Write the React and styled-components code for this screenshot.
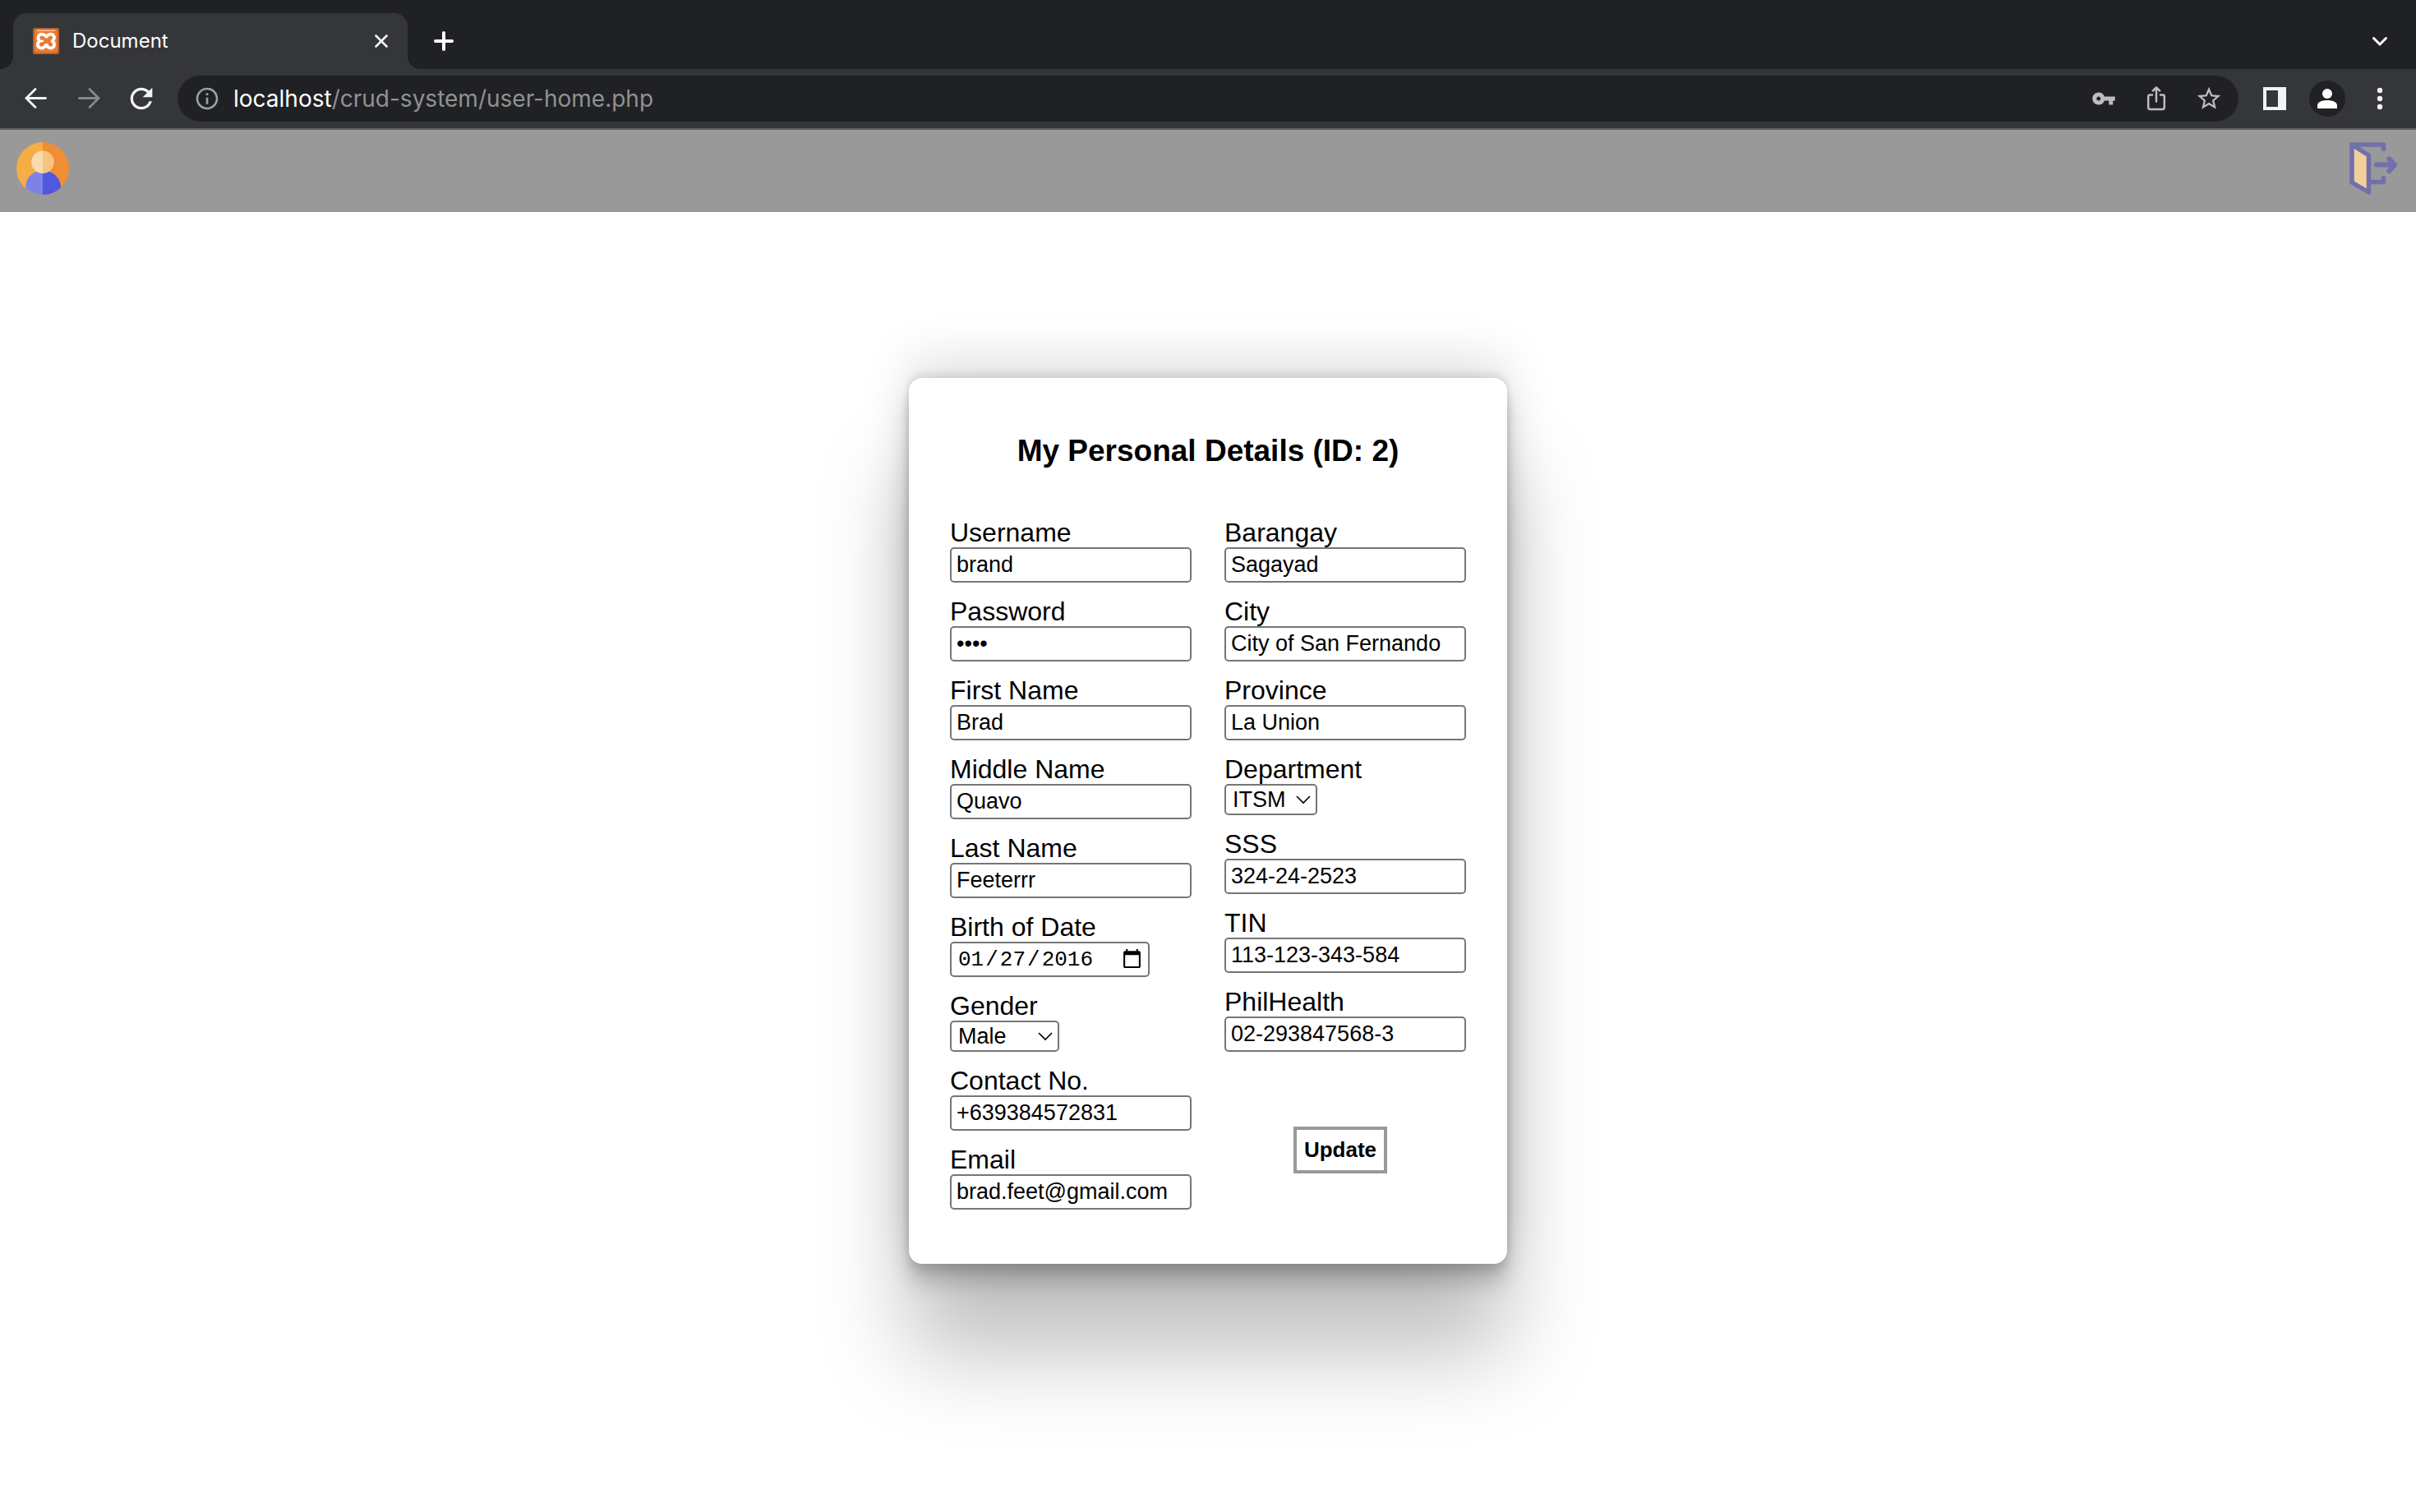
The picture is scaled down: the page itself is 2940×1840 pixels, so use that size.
import React from "react";
import styled, { createGlobalStyle } from "styled-components";
import { MdInfoOutline, MdRefresh, MdStarBorder, MdVpnKey } from "react-icons/md";

const GlobalStyle = createGlobalStyle`
  *, *::before, *::after { box-sizing: border-box; }
  body {
    margin: 0;
    background: #fff;
    color: #000;
    font-family: "Liberation Sans", Arial, sans-serif;
  }
`;

const Window = styled.div`
  display: flex;
  flex-direction: column;
  min-height: 100vh;
`;

/* ---------- browser frame ---------- */

const TabStrip = styled.div`
  display: flex;
  align-items: center;
  height: 84px;
  padding: 16px 22px 0 16px;
  background: #202124;
  color: #fff;
  font-family: Inter, Roboto, sans-serif;
`;

const Tab = styled.div`
  position: relative;
  display: flex;
  align-items: center;
  gap: 16px;
  width: 480px;
  height: 100%;
  margin-right: 22px;
  padding: 0 24px;
  border-radius: 16px 16px 0 0;
  background: #35363a;
  font-size: 24px;

  &::before,
  &::after {
    content: "";
    position: absolute;
    bottom: 0;
    width: 16px;
    height: 16px;
  }
  &::before {
    right: 100%;
    background: radial-gradient(circle at 0 0, transparent 16px, #35363a 16px);
  }
  &::after {
    left: 100%;
    background: radial-gradient(circle at 100% 0, transparent 16px, #35363a 16px);
  }
`;

const TabTitle = styled.span`
  flex: 1;
  line-height: 32px;
`;

const IconButton = styled.button`
  display: flex;
  align-items: center;
  justify-content: center;
  flex: none;
  width: ${({ $size = 44 }) => $size}px;
  height: ${({ $size = 44 }) => $size}px;
  margin: 0;
  padding: 0;
  border: 0;
  border-radius: 50%;
  background: ${({ $fill = "transparent" }) => $fill};
  color: ${({ $color = "#f1f3f4" }) => $color};
`;

const Spacer = styled.div`
  flex: 1;
`;

const Toolbar = styled.div`
  display: flex;
  align-items: center;
  gap: 20px;
  height: 74px;
  padding: 0 22px;
  border-bottom: 2px solid #5f6063;
  background: #35363a;
`;

const AddressBar = styled.div`
  display: flex;
  flex: 1;
  align-items: center;
  gap: 20px;
  height: 56px;
  margin: 0 2px;
  padding: 0 14px 0 20px;
  border-radius: 28px;
  background: #202124;
`;

const Location = styled.div`
  display: flex;
  flex: 1;
  align-items: center;
  gap: 16px;
  color: #9aa0a6;
`;

const Url = styled.div`
  flex: 1;
  color: #909193;
  font-family: Inter, Roboto, sans-serif;
  font-size: 28px;
  line-height: 36px;
`;

const Host = styled.span`
  color: #fff;
`;

/* ---------- page ---------- */

const PageHeader = styled.header`
  display: flex;
  align-items: flex-start;
  justify-content: space-between;
  height: 100px;
  padding: 15px 20px;
  background: #999;
`;

const HeaderLink = styled.a`
  display: block;
  width: 64px;
  height: 64px;
`;

const Main = styled.main`
  display: flex;
  flex: 1;
  align-items: center;
  justify-content: center;
  padding-bottom: 100px;
`;

const Card = styled.form`
  padding: 68px 50px 66px;
  border-radius: 16px;
  background: #fff;
  box-shadow:
    rgba(0, 0, 0, 0.25) 0 108px 110px,
    rgba(0, 0, 0, 0.12) 0 -24px 60px,
    rgba(0, 0, 0, 0.12) 0 8px 12px,
    rgba(0, 0, 0, 0.17) 0 24px 26px,
    rgba(0, 0, 0, 0.09) 0 -6px 10px;
`;

const Title = styled.h1`
  margin: 0 0 60px;
  font-size: 37px;
  line-height: 42px;
  text-align: center;
`;

const Columns = styled.div`
  display: grid;
  grid-template-columns: 294px 294px;
  gap: 40px;
`;

const Column = styled.div`
  display: flex;
  flex-direction: column;
  gap: 17px;
`;

const Field = styled.div`
  display: flex;
  flex-direction: column;
  align-items: flex-start;
`;

const Label = styled.label`
  font-size: 32px;
  line-height: 36px;
`;

const TextInput = styled.input`
  width: 100%;
  height: 43px;
  padding: 2px 6px;
  border: 2px solid #767676;
  border-radius: 5px;
  background: #fff;
  color: #000;
  font-family: "Liberation Sans", Arial, sans-serif;
  font-size: 27px;
`;

const DateInput = styled(TextInput)`
  width: 243px;
  font-family: "Liberation Mono", monospace;
  font-size: 26px;

  &::-webkit-datetime-edit-fields-wrapper {
    padding: 0;
  }
  &::-webkit-datetime-edit-month-field,
  &::-webkit-datetime-edit-day-field,
  &::-webkit-datetime-edit-year-field {
    padding: 0 2px;
  }
  &::-webkit-calendar-picker-indicator {
    width: 27px;
    height: 27px;
    margin: 0;
    padding: 0;
  }
`;

const SelectBox = styled.div`
  position: relative;
  width: ${({ $width }) => $width}px;
  height: 38px;
`;

const Select = styled.select`
  appearance: none;
  width: 100%;
  height: 100%;
  padding: 0 8px;
  border: 2px solid #767676;
  border-radius: 5px;
  background: #fff;
  color: #000;
  font-family: "Liberation Sans", Arial, sans-serif;
  font-size: 27px;
`;

const SelectArrow = styled.svg`
  position: absolute;
  top: 13px;
  right: 8px;
  pointer-events: none;
`;

const Actions = styled.div`
  display: flex;
  justify-content: center;
  padding: 74px 12px 0 0;
`;

const UpdateButton = styled.button`
  height: 57px;
  padding: 0 9px;
  border: 4px solid #999;
  background: #fff;
  color: #000;
  font-family: "Liberation Sans", Arial, sans-serif;
  font-size: 26px;
  font-weight: 700;
`;

/* ---------- drawings ---------- */

const Favicon = () => (
  <svg width="32" height="32" viewBox="0 0 32 32" aria-hidden="true">
    <rect width="32" height="32" rx="2" fill="#b9622a" />
    <rect x="2" y="2" width="28" height="28" rx="2" fill="#ea7b33" />
    <path d="M4 2h24l-2 2H6z" fill="#f3b58c" />
    <path
      d="M16 10.500C14.500 7.500 10.500 7 8 8.500C5.500 10.500 6 14 8.500 16C5.500 18 5 21.500 7.500 23.500C10 25.500 14 24.500 15.500 21H17C18.500 24.500 22 25.500 24.500 23.500C27 21.500 26.500 18 23.500 16C26.500 14 26.500 10.500 24.500 8.500C22 7 18 7.500 17 10.500Z"
      fill="none"
      stroke="#fff"
      strokeWidth="3.800"
      strokeLinejoin="round"
    />
    <path d="M8.500 16H13" stroke="#fff" strokeWidth="2.500" />
  </svg>
);

const CloseIcon = () => (
  <svg width="16" height="16" viewBox="0 0 16 16" fill="none" stroke="currentColor" strokeWidth="2.600" strokeLinecap="round">
    <path d="M1.500 1.500l13 13M14.500 1.500l-13 13" />
  </svg>
);

const PlusIcon = () => (
  <svg width="24" height="24" viewBox="0 0 24 24" fill="none" stroke="currentColor" strokeWidth="4" strokeLinecap="round">
    <path d="M12 2v20M2 12h20" />
  </svg>
);

const ChevronIcon = () => (
  <svg width="20" height="14" viewBox="0 0 20 14" fill="none" stroke="currentColor" strokeWidth="3" strokeLinecap="round">
    <path d="M2.500 3.500L10 11l7.500-7.500" />
  </svg>
);

const BackIcon = ({ flip }) => (
  <svg width="28" height="28" viewBox="0 0 28 28" fill="none" stroke="currentColor" strokeWidth="2.800" strokeLinecap="round">
    <path d={flip ? "M2.500 13.500H26M15 2.500L26 13.500L15 24.500" : "M25.500 13.500H2M13 2.500L2 13.500L13 24.500"} />
  </svg>
);

const ShareIcon = () => (
  <svg width="24" height="32" viewBox="0 0 24 32" fill="none" stroke="currentColor" strokeWidth="2.500" strokeLinecap="round" strokeLinejoin="round">
    <path d="M7 11.500H4Q2.200 11.500 2.200 13.500V26.500Q2.200 29 4.500 29H19.500Q21.800 29 21.800 26.500V13.500Q21.800 11.500 20 11.500H17" />
    <path d="M12 19.500V3M7.800 6.500L12 2.500L16.200 6.500" />
  </svg>
);

const SidePanelIcon = () => (
  <svg width="28" height="28" viewBox="0 0 28 28">
    <path fillRule="evenodd" fill="currentColor" d="M0 0H28V28H0ZM4 4V24H18V4Z" />
  </svg>
);

const PersonIcon = () => (
  <svg width="24" height="24" viewBox="0 0 24 24" fill="#fff">
    <circle cx="12" cy="6" r="6" />
    <path d="M0 24V20.500C0 16 6 14 12 14S24 16 24 20.500V24Z" />
  </svg>
);

const MenuIcon = () => (
  <svg width="8" height="28" viewBox="0 0 8 28" fill="currentColor">
    <circle cx="4" cy="4" r="3.200" />
    <circle cx="4" cy="14" r="3.200" />
    <circle cx="4" cy="24" r="3.200" />
  </svg>
);

const UserAvatar = () => (
  <svg width="64" height="64" viewBox="0 0 64 64" aria-hidden="true">
    <path d="M32 0A32 32 0 0 0 32 64Z" fill="#f5ad45" />
    <path d="M32 0A32 32 0 0 1 32 64Z" fill="#ef8e33" />
    <path d="M32 34C20 35 11 43 11 56A32 32 0 0 0 32 64Z" fill="#7d83e6" />
    <path d="M32 34C44 35 54 43 54 55.500A32 32 0 0 1 32 64Z" fill="#4f59de" />
    <path d="M32 10.500A13.800 13.800 0 0 0 32 38.100Z" fill="#f9dbae" />
    <path d="M32 10.500A13.800 13.800 0 0 1 32 38.100Z" fill="#f5c580" />
  </svg>
);

const LogoutDoor = () => (
  <svg width="64" height="64" viewBox="0 0 64 64" fill="none" stroke="#7170ac" strokeWidth="5.500" strokeLinecap="round" strokeLinejoin="round" aria-hidden="true">
    <path d="M6 3L26.500 16V61L6 49Z" fill="#f1ce9a" />
    <path d="M6 3H44.500V8.500" />
    <path d="M28 48.500H44.500V43.500" />
    <path d="M36 27.500H57M51.500 20.500L58 27.500L51.500 35" strokeWidth="6" />
  </svg>
);

/* ---------- form ---------- */

const accountFields = [
  { id: "username", label: "Username", value: "brand" },
  { id: "password", label: "Password", value: "1234", type: "password" },
  { id: "first-name", label: "First Name", value: "Brad" },
  { id: "middle-name", label: "Middle Name", value: "Quavo" },
  { id: "last-name", label: "Last Name", value: "Feeterrr" },
  { id: "birth-date", label: "Birth of Date", value: "2016-01-27", type: "date" },
  { id: "gender", label: "Gender", value: "Male", type: "select", width: 133 },
  { id: "contact", label: "Contact No.", value: "+639384572831", type: "tel" },
  { id: "email", label: "Email", value: "brad.feet@gmail.com", type: "email" },
];

const addressFields = [
  { id: "barangay", label: "Barangay", value: "Sagayad" },
  { id: "city", label: "City", value: "City of San Fernando" },
  { id: "province", label: "Province", value: "La Union" },
  { id: "department", label: "Department", value: "ITSM", type: "select", width: 113 },
  { id: "sss", label: "SSS", value: "324-24-2523" },
  { id: "tin", label: "TIN", value: "113-123-343-584" },
  { id: "philhealth", label: "PhilHealth", value: "02-293847568-3" },
];

function FormField({ id, label, value, type = "text", width }) {
  return (
    <Field>
      <Label htmlFor={id}>{label}</Label>
      {type === "select" ? (
        <SelectBox $width={width}>
          <Select id={id} defaultValue={value}>
            <option>{value}</option>
          </Select>
          <SelectArrow width="18" height="12" viewBox="0 0 18 12" fill="none" stroke="#000" strokeWidth="1.600">
            <path d="M1 2l8 8l8-8" />
          </SelectArrow>
        </SelectBox>
      ) : type === "date" ? (
        <DateInput id={id} type="date" defaultValue={value} />
      ) : (
        <TextInput id={id} type={type} defaultValue={value} />
      )}
    </Field>
  );
}

export default function App() {
  return (
    <Window>
      <GlobalStyle />
      <TabStrip>
        <Tab>
          <Favicon />
          <TabTitle>Document</TabTitle>
          <IconButton $size={16} aria-label="Close tab"><CloseIcon /></IconButton>
        </Tab>
        <IconButton $color="#fff" aria-label="New tab"><PlusIcon /></IconButton>
        <Spacer />
        <IconButton $color="#fff" aria-label="Search tabs"><ChevronIcon /></IconButton>
      </TabStrip>
      <Toolbar>
        <IconButton aria-label="Back"><BackIcon /></IconButton>
        <IconButton $color="#87888b" aria-label="Forward"><BackIcon flip /></IconButton>
        <IconButton aria-label="Reload"><MdRefresh size={40} /></IconButton>
        <AddressBar>
          <Location>
            <MdInfoOutline size={32} />
            <Url role="textbox" aria-label="Address" tabIndex={0}>
              <Host>localhost</Host>/crud-system/user-home.php
            </Url>
          </Location>
          <IconButton $color="#bdbdbe" aria-label="Passwords"><MdVpnKey size={30} /></IconButton>
          <IconButton $color="#bdbdbe" aria-label="Share"><ShareIcon /></IconButton>
          <IconButton $color="#bdbdbe" aria-label="Bookmark"><MdStarBorder size={34} /></IconButton>
        </AddressBar>
        <IconButton aria-label="Side panel"><SidePanelIcon /></IconButton>
        <IconButton $fill="#202124" aria-label="Profile"><PersonIcon /></IconButton>
        <IconButton aria-label="Menu"><MenuIcon /></IconButton>
      </Toolbar>
      <PageHeader>
        <HeaderLink href="#profile" aria-label="My profile"><UserAvatar /></HeaderLink>
        <HeaderLink href="#logout" aria-label="Log out"><LogoutDoor /></HeaderLink>
      </PageHeader>
      <Main>
        <Card onSubmit={(event) => event.preventDefault()}>
          <Title>My Personal Details (ID: 2)</Title>
          <Columns>
            <Column>
              {accountFields.map((field) => <FormField key={field.id} {...field} />)}
            </Column>
            <Column>
              {addressFields.map((field) => <FormField key={field.id} {...field} />)}
              <Actions>
                <UpdateButton type="submit">Update</UpdateButton>
              </Actions>
            </Column>
          </Columns>
        </Card>
      </Main>
    </Window>
  );
}
